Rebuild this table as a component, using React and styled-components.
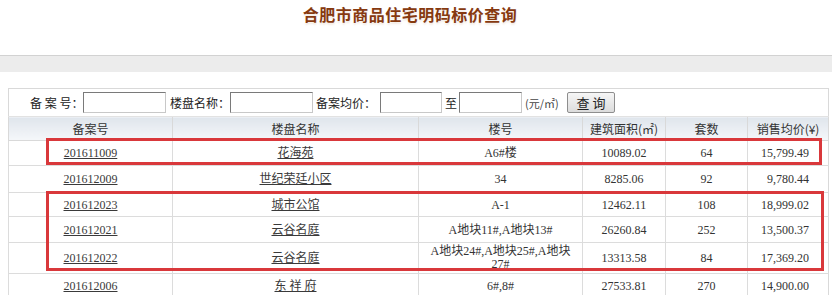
import React from 'react'
import styled, { createGlobalStyle } from 'styled-components'

const GlobalStyle = createGlobalStyle`
    body {
        margin: 0;
        background: #ffffff;
        font-family: "Liberation Serif", "Noto Sans CJK SC", serif;
        font-size: 12px;
        color: #333333;
    }
`;

const rows = [
    { no: '201611009', name: '花海苑', bld: 'A6#楼', area: '10089.02', sets: '64', price: '15,799.49', h: 25 },
    { no: '201612009', name: '世纪荣廷小区', bld: '34', area: '8285.06', sets: '92', price: '9,780.44', h: 27 },
    { no: '201612023', name: '城市公馆', bld: 'A-1', area: '12462.11', sets: '108', price: '18,999.02', h: 24 },
    { no: '201612021', name: '云谷名庭', bld: 'A地块11#,A地块13#', area: '26260.84', sets: '252', price: '13,500.37', h: 26 },
    { no: '201612022', name: '云谷名庭', bld: ['A地块24#,A地块25#,A地块', '27#'], area: '13313.58', sets: '84', price: '17,369.20', h: 31 },
    { no: '201612006', name: '东 祥 府', bld: '6#,8#', area: '27533.81', sets: '270', price: '14,900.00', h: 25 },
]

export default function App(){
    return(
        <Page>
            <GlobalStyle/>
            <Title>合肥市商品住宅明码标价查询</Title>
            <Band/>
            <TableWrap>
                <Table>
                    <colgroup>
                        <col style={{width: 164}}/>
                        <col style={{width: 246}}/>
                        <col style={{width: 164}}/>
                        <col style={{width: 83}}/>
                        <col style={{width: 82}}/>
                        <col style={{width: 81}}/>
                    </colgroup>
                    <tbody>
                        <tr>
                            <SearchCell colSpan={6}>
                                <SearchBar>
                                    <Label $w={74} $pad={21}>备 案 号：</Label>
                                    <Input $w={83}/>
                                    <Label $w={64} $pad={4}>楼盘名称：</Label>
                                    <Input $w={83}/>
                                    <Label $w={67} $pad={3}>备案均价：</Label>
                                    <Input $w={62}/>
                                    <Label $w={17} $pad={3}>至</Label>
                                    <Input $w={63}/>
                                    <Unit>(元/㎡)</Unit>
                                    <Button>查 询</Button>
                                </SearchBar>
                            </SearchCell>
                        </tr>
                        <tr>
                            <Th>备案号</Th>
                            <Th>楼盘名称</Th>
                            <Th>楼号</Th>
                            <Th>建筑面积(㎡)</Th>
                            <Th>套数</Th>
                            <Th>销售均价(¥)</Th>
                        </tr>
                        {rows.map((r) => (
                            <Tr key={r.no} $h={r.h}>
                                <Td><Link>{r.no}</Link></Td>
                                <Td><Link>{r.name}</Link></Td>
                                <Td $tight={Array.isArray(r.bld)}>{Array.isArray(r.bld) ? <>{r.bld[0]}<br/>{r.bld[1]}</> : r.bld}</Td>
                                <Td>{r.area}</Td>
                                <Td>{r.sets}</Td>
                                <Td $right>{r.price}</Td>
                            </Tr>
                        ))}
                    </tbody>
                </Table>
                <Mark $top={50} $height={27} $width={776}/>
                <Mark $top={103} $height={80} $width={778}/>
            </TableWrap>
        </Page>
    )
}

const Page = styled.div`
    width: 832px;
    height: 295px;
    overflow: hidden;
`;

const Title = styled.h1`
    margin: 0;
    padding-top: 6px;
    height: 49px;
    text-align: center;
    font-family: "Noto Sans CJK SC", sans-serif;
    font-size: 16px;
    line-height: 16px;
    font-weight: bold;
    letter-spacing: 0.5px;
    color: #86390f;
    text-indent: -12px;
    text-shadow: 0 2px 2px rgba(160, 110, 60, 0.15);
`;

const Band = styled.div`
    height: 16px;
    background: #ececec;
    border-top: 1px solid #d2d2d2;
    margin-bottom: 16px;
`;

const TableWrap = styled.div`
    position: relative;
    margin-left: 8px;
    width: 821px;
`;

const Table = styled.table`
    border-collapse: collapse;
    table-layout: fixed;
    width: 821px;
    border: 1px solid #d9d9d9;
`;

const SearchCell = styled.td`
    height: 27px;
    padding: 0;
    border-bottom: 1px solid #e2e2e2;
`;

const SearchBar = styled.div`
    display: flex;
    align-items: center;
    height: 27px;
    font-family: "Noto Sans CJK SC", sans-serif;
    font-size: 12px;
    color: #222;
`;

const Label = styled.span`
    box-sizing: border-box;
    flex: none;
    width: ${p => p.$w}px;
    padding-left: ${p => p.$pad}px;
    white-space: nowrap;
    overflow: hidden;
`;

const Input = styled.input`
    box-sizing: border-box;
    flex: none;
    width: ${p => p.$w}px;
    height: 21px;
    margin: 0;
    border: 1px solid #7a7a7a;
    border-right-color: #c8c8c8;
    border-bottom-color: #c8c8c8;
    background: #fff;
    padding: 0 2px;
`;

const Unit = styled.span`
    box-sizing: border-box;
    flex: none;
    width: 45px;
    padding-left: 3px;
    font-size: 11px;
    color: #444;
    white-space: nowrap;
`;

const Button = styled.button`
    box-sizing: border-box;
    flex: none;
    width: 48px;
    height: 21px;
    padding: 0;
    border: 1px solid #8e8e8e;
    border-radius: 2px;
    background: linear-gradient(#f6f6f6, #dcdcdc);
    font-family: "Noto Sans CJK SC", sans-serif;
    font-size: 13px;
    line-height: 19px;
    color: #222;
`;

const Th = styled.th`
    height: 23px;
    padding: 0;
    font-family: "Noto Sans CJK SC", sans-serif;
    font-weight: normal;
    font-size: 12px;
    color: #333;
    background: linear-gradient(#dfe5ec, #f5f7fa);
    border-left: 1px solid #d9d9d9;
    border-bottom: 1px solid #d9d9d9;
`;

const Tr = styled.tr`
    height: ${p => p.$h}px;
`;

const Td = styled.td`
    padding: 0 ${p => p.$right ? '19px' : '4px'} 0 4px;
    text-align: ${p => p.$right ? 'right' : 'center'};
    line-height: ${p => p.$tight ? '13px' : '16px'};
    font-family: "Liberation Serif", "Noto Sans CJK SC", serif;
    font-size: 12px;
    color: #333;
    border-left: 1px solid #dcdcdc;
    border-bottom: 1px solid #dcdcdc;
    white-space: nowrap;
`;

const Link = styled.a`
    color: #3a3a3a;
    text-decoration: underline;
    cursor: pointer;
`;

const Mark = styled.div`
    position: absolute;
    left: 38px;
    top: ${p => p.$top}px;
    width: ${p => p.$width}px;
    height: ${p => p.$height}px;
    border: 3px solid #d9383b;
    box-sizing: border-box;
    pointer-events: none;
`;
